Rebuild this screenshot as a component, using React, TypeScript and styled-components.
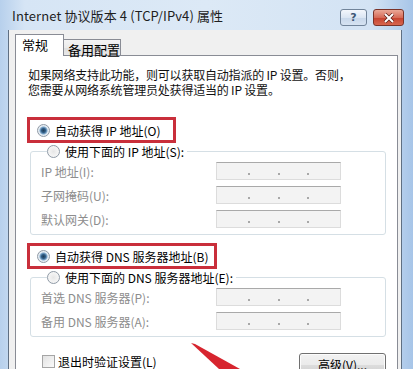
import React from 'react'
import styled, { createGlobalStyle } from 'styled-components'

const font = `"Noto Sans CJK SC", "Noto Sans", sans-serif`

const GlobalStyle = createGlobalStyle`
  html, body { margin: 0; padding: 0; background: #b9d1ea; }
  body { width: 413px; height: 369px; overflow: hidden; }
  * { box-sizing: border-box; }
`

const Window = styled.div`
  position: relative;
  width: 413px;
  height: 369px;
  overflow: hidden;
  display: flex;
  flex-direction: column;
  background: linear-gradient(90deg, #b7d0ec 0%, #d6e5f5 6%, #dce9f6 50%, #d3e3f4 90%, #a7c5e8 100%);
  font-family: ${font};
  color: #000;
`

const TitleBar = styled.div`
  height: 30px;
  flex: none;
  display: flex;
  align-items: center;
  padding: 0 9px 0 12px;
`

const Title = styled.span`
  font-size: 13px;
  color: #1e1e1e;
  letter-spacing: 0.1px;
`

const Caption = styled.div`
  margin-left: auto;
  display: flex;
  gap: 6px;
  align-self: flex-start;
  margin-top: 9px;
`

const HelpButton = styled.div`
  width: 27px;
  height: 17px;
  border: 1px solid #71849a;
  border-radius: 3px;
  background: linear-gradient(#f3f7fc, #dbe6f3 50%, #c7d7ea 51%, #d6e3f2);
  display: flex;
  align-items: center;
  justify-content: center;
  font-family: "DejaVu Sans", sans-serif;
  font-size: 11px;
  font-weight: bold;
  color: #3d5776;
`

const CloseButton = styled.div`
  width: 31px;
  height: 17px;
  border: 1px solid #7a3329;
  border-radius: 3px;
  background: linear-gradient(#eaa897, #d66b58 50%, #c5412e 51%, #d7664f);
  display: flex;
  align-items: center;
  justify-content: center;
`

const Body = styled.div`
  flex: 1;
  display: flex;
  margin: 0 13px 0 8px;
  min-height: 0;
`

const Client = styled.div`
  flex: 1;
  display: flex;
  flex-direction: column;
  background: #f0f0f0;
  border-left: 1px solid #5f6f82;
  border-right: 1px solid #5f6f82;
  padding: 4px 3px 0 6px;
`

const Tabs = styled.div`
  height: 21px;
  display: flex;
  align-items: flex-end;
  flex: none;
`

const Tab = styled.div<{ $active?: boolean }>`
  position: relative;
  z-index: 1;
  font-size: 13px;
  display: flex;
  align-items: center;
  border: 1px solid #898c95;
  border-bottom: none;
  ${p =>
    p.$active
      ? `
    width: 49px;
    height: 22px;
    margin-bottom: -1px;
    background: #fff;
    padding-left: 6px;
    padding-bottom: 2px;
  `
      : `
    width: 57px;
    height: 16px;
    border-left: none;
    background: linear-gradient(#f4f4f4, #ebebeb 50%, #dedede 51%, #e8e8e8);
    padding-left: 4px;
    padding-top: 3px;
  `}
`

const Panel = styled.div`
  flex: 1;
  display: flex;
  flex-direction: column;
  align-items: flex-start;
  background: #fff;
  border: 1px solid #898c95;
  padding: 11px 11px 0 11px;
`

const Desc = styled.p`
  margin: 0 0 0 1px;
  font-size: 12px;
  line-height: 15px;
  color: #111;
  letter-spacing: -0.2px;
`

const Highlight = styled.div<{ $w: number; $top: number }>`
  width: ${p => p.$w}px;
  height: 26px;
  margin-top: ${p => p.$top}px;
  border: 3px solid #c92f3b;
  display: flex;
  align-items: center;
  padding-left: 7px;
  flex: none;
`

const Choice = styled.span`
  display: inline-flex;
  align-items: center;
  gap: 5px;
  font-size: 12px;
  line-height: 15px;
  white-space: nowrap;
`

const Radio = styled.span<{ $on?: boolean }>`
  width: 13px;
  height: 13px;
  border-radius: 50%;
  flex: none;
  border: 1px solid #8f9aa6;
  background: ${p =>
    p.$on
      ? 'radial-gradient(circle, #1f3d58 0, #2f5c84 2px, #7fa8cc 3.5px, #e4ecf3 4.5px, #f4f4f4 100%)'
      : 'radial-gradient(circle, #e6e6e6 0, #f0f0f0 3px, #fafafa 100%)'};
`

const Group = styled.fieldset`
  width: 356px;
  margin: 1px 0 0 3px;
  padding: 0 0 3px 10px;
  border: 1px solid #d5dfe5;
  border-radius: 3px;
  min-width: 0;
  flex: none;
`

const Legend = styled.legend`
  margin-left: 6px;
  padding: 0 3px 0 0;
  height: 15px;
  display: flex;
  align-items: center;
`

const Row = styled.div`
  display: grid;
  grid-template-columns: 175px 125px;
  align-items: center;
  height: 24px;
`

const Label = styled.span`
  font-size: 12px;
  color: #8d8d8d;
  white-space: nowrap;
`

const IpBox = styled.div`
  height: 18px;
  border: 1px solid #dcdcdc;
  border-top-color: #a9a9a9;
  background: #f3f3f3;
  display: flex;
  align-items: center;
  padding: 0 3px;
`

const Seg = styled.span`
  flex: 1;
`

const Dot = styled.span`
  width: 2px;
  height: 2px;
  margin-top: 5px;
  background: #a8a8a8;
`

const Footer = styled.div`
  width: 100%;
  margin-top: 16px;
  display: flex;
  justify-content: space-between;
  align-items: flex-start;
`

const Check = styled.span`
  margin: 1px 0 0 15px;
  display: inline-flex;
  align-items: center;
  gap: 3px;
  font-size: 12px;
  line-height: 15px;
`

const Box = styled.span`
  width: 13px;
  height: 13px;
  border: 1px solid #a5a5a5;
  background: linear-gradient(135deg, #e2e2e2, #fafafa);
`

const Button = styled.div`
  width: 87px;
  height: 23px;
  border: 1px solid #707070;
  border-radius: 3px;
  background: linear-gradient(#f2f2f2, #ebebeb 50%, #dddddd 51%, #cfcfcf);
  box-shadow: inset 0 0 0 1px #fcfcfc;
  font-size: 12px;
  display: flex;
  align-items: center;
  justify-content: center;
`

const Overlay = styled.svg`
  position: absolute;
  left: 0;
  top: 0;
  pointer-events: none;
`

const IpField = () => (
  <IpBox>
    <Seg />
    <Dot />
    <Seg />
    <Dot />
    <Seg />
    <Dot />
    <Seg />
  </IpBox>
)

const App = () => (
  <>
    <GlobalStyle />
    <Window>
      <TitleBar>
        <Title>Internet 协议版本 4 (TCP/IPv4) 属性</Title>
        <Caption>
          <HelpButton>?</HelpButton>
          <CloseButton>
            <svg width="12" height="10" viewBox="0 0 12 10">
              <path d="M2 1 L10 9 M10 1 L2 9" stroke="#5a1e16" strokeWidth="3.4" />
              <path d="M2 1 L10 9 M10 1 L2 9" stroke="#fff" strokeWidth="2" />
            </svg>
          </CloseButton>
        </Caption>
      </TitleBar>
      <Body>
        <Client>
          <Tabs>
            <Tab $active>常规</Tab>
            <Tab>备用配置</Tab>
          </Tabs>
          <Panel>
            <Desc>
              如果网络支持此功能，则可以获取自动指派的 IP 设置。否则，
              <br />
              您需要从网络系统管理员处获得适当的 IP 设置。
            </Desc>
            <Highlight $w={149} $top={20}>
              <Choice>
                <Radio $on />
                自动获得 IP 地址(O)
              </Choice>
            </Highlight>
            <Group>
              <Legend>
                <Choice>
                  <Radio />
                  使用下面的 IP 地址(S):
                </Choice>
              </Legend>
              <Row>
                <Label>IP 地址(I):</Label>
                <IpField />
              </Row>
              <Row>
                <Label>子网掩码(U):</Label>
                <IpField />
              </Row>
              <Row>
                <Label>默认网关(D):</Label>
                <IpField />
              </Row>
            </Group>
            <Highlight $w={190} $top={8}>
              <Choice>
                <Radio $on />
                自动获得 DNS 服务器地址(B)
              </Choice>
            </Highlight>
            <Group>
              <Legend>
                <Choice>
                  <Radio />
                  使用下面的 DNS 服务器地址(E):
                </Choice>
              </Legend>
              <Row>
                <Label>首选 DNS 服务器(P):</Label>
                <IpField />
              </Row>
              <Row>
                <Label>备用 DNS 服务器(A):</Label>
                <IpField />
              </Row>
            </Group>
            <Footer>
              <Check>
                <Box />
                退出时验证设置(L)
              </Check>
              <Button>高级(V)...</Button>
            </Footer>
          </Panel>
        </Client>
      </Body>
      <Overlay width="413" height="369" viewBox="0 0 413 369">
        <polygon points="191,343 195,344 240,369 219,369" fill="#d7252f" />
      </Overlay>
    </Window>
  </>
)

export default App
